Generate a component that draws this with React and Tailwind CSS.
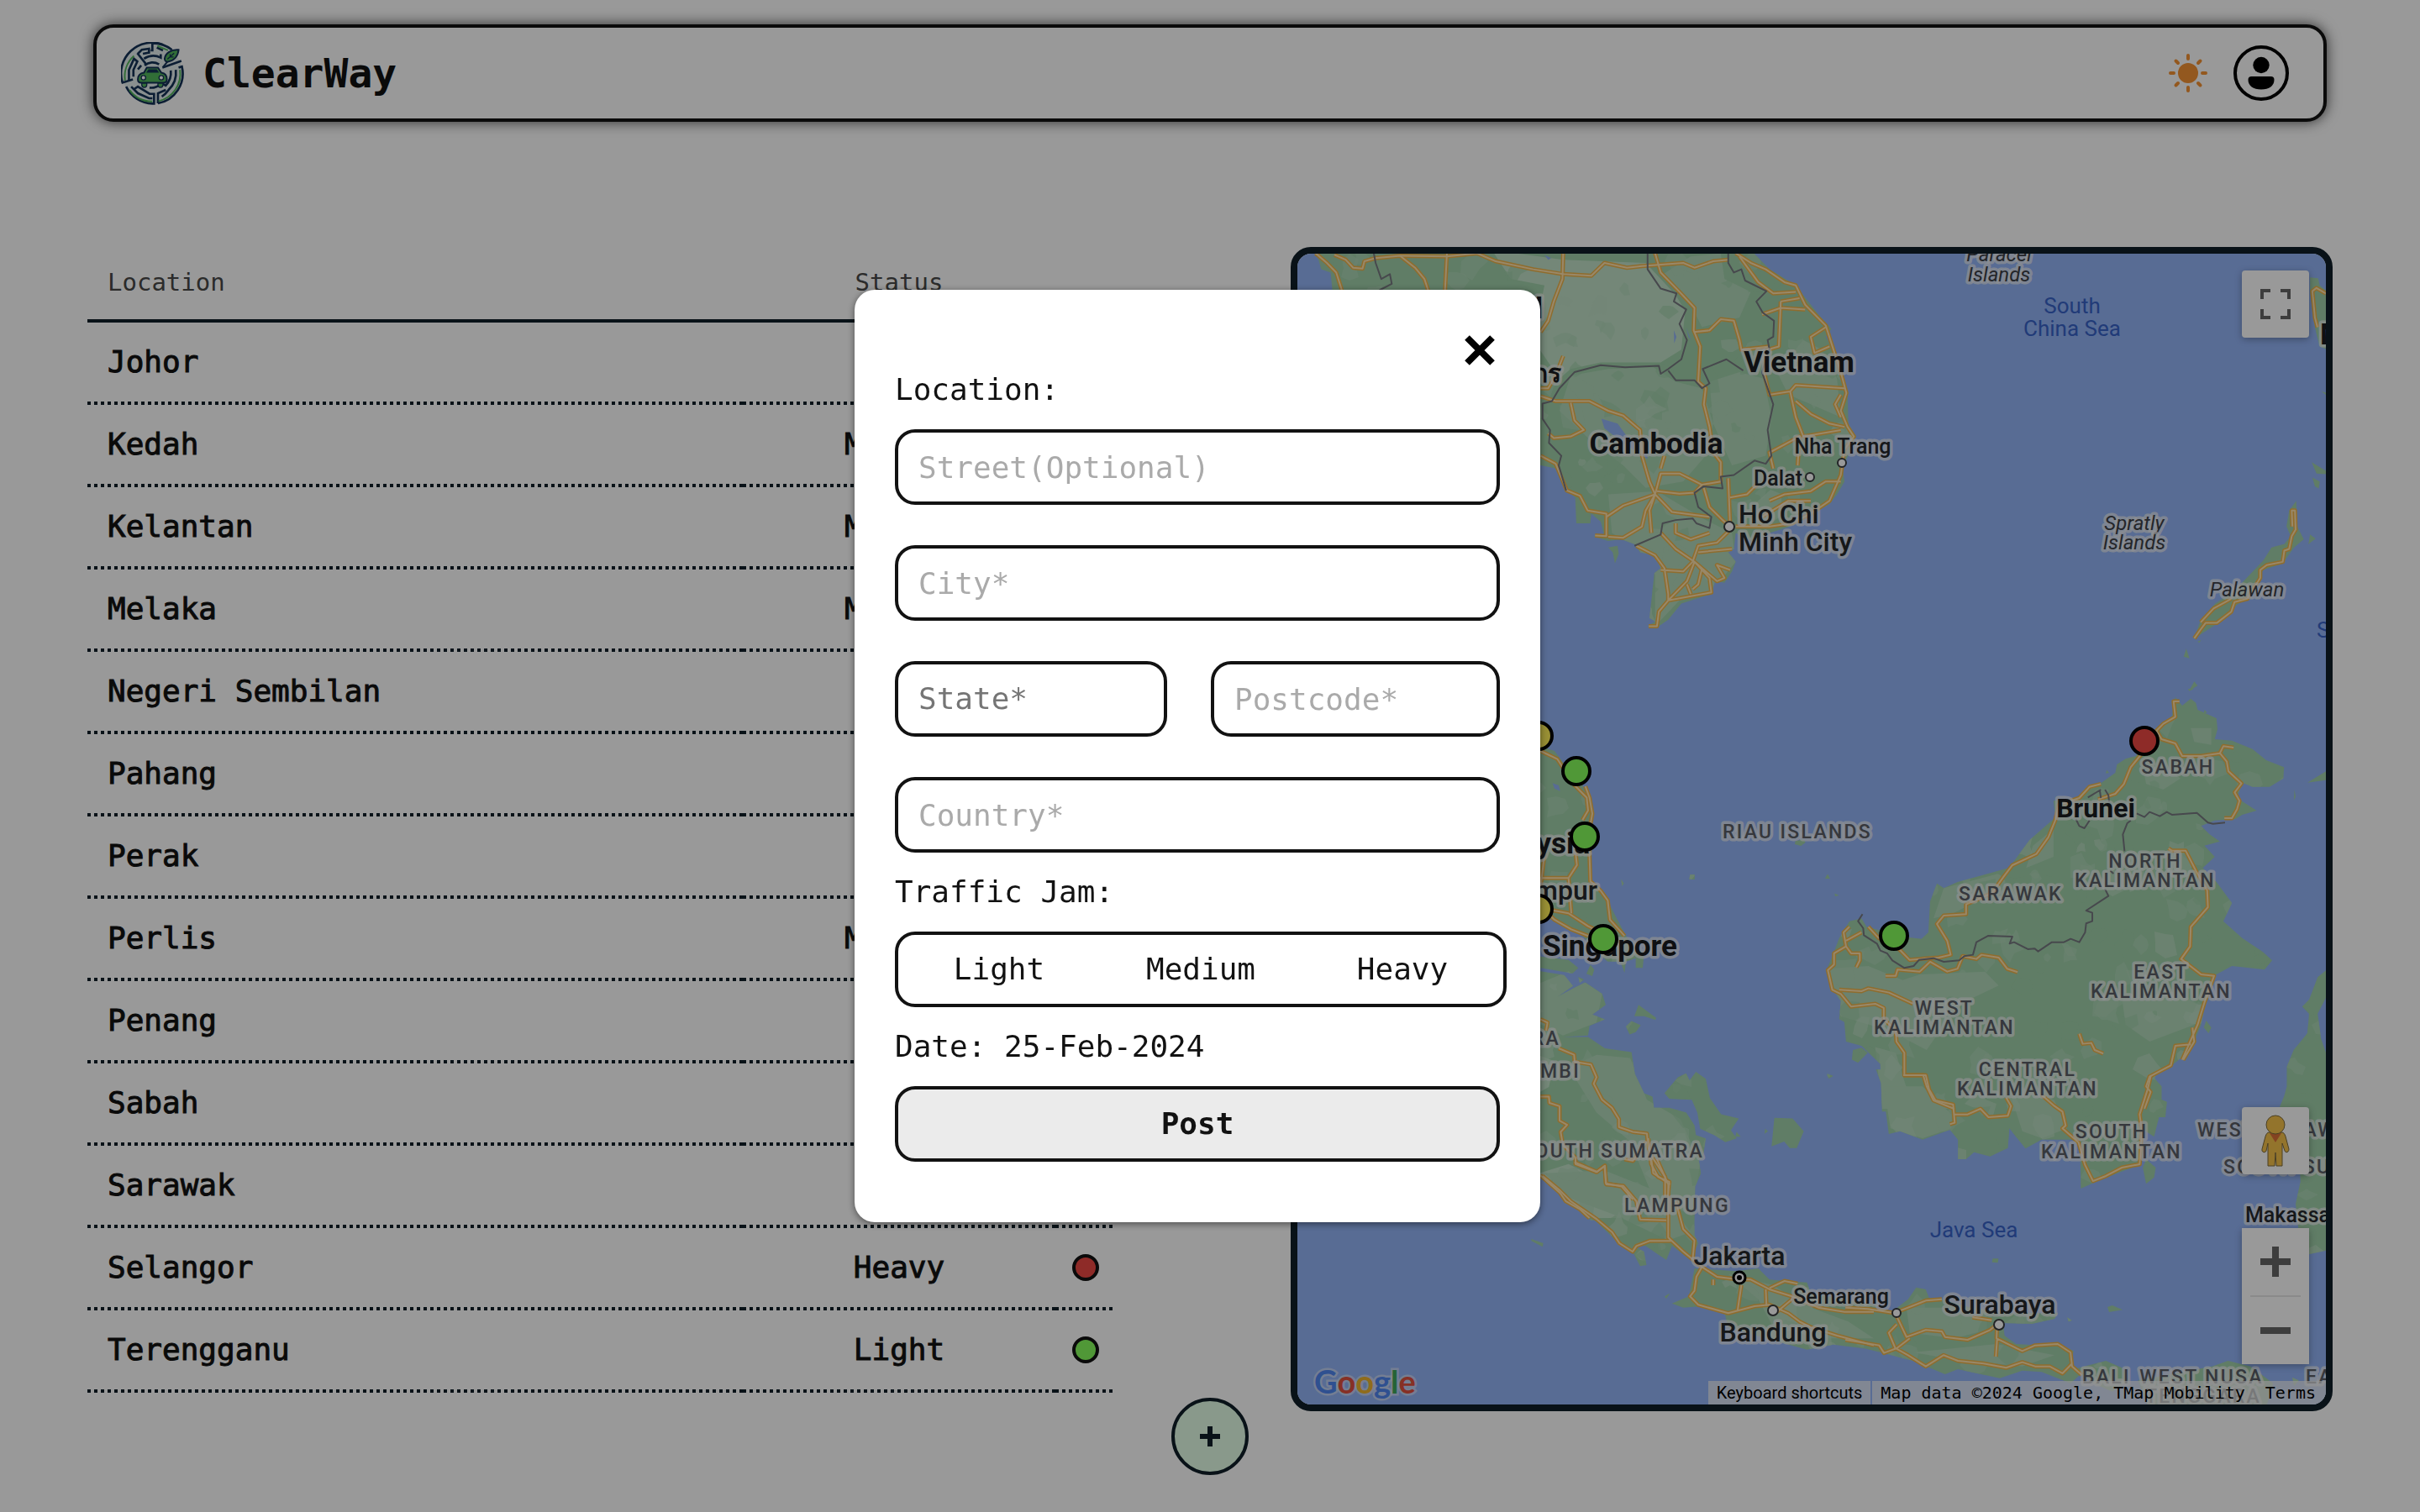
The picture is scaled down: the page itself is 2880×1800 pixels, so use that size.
import React from "react";

/* ---------- data ---------- */

const ROWS = [
  ["Johor", "Light"],
  ["Kedah", "Medium"],
  ["Kelantan", "Medium"],
  ["Melaka", "Medium"],
  ["Negeri Sembilan", "Light"],
  ["Pahang", "Light"],
  ["Perak", "Light"],
  ["Perlis", "Medium"],
  ["Penang", "Light"],
  ["Sabah", "Heavy"],
  ["Sarawak", "Light"],
  ["Selangor", "Heavy"],
  ["Terengganu", "Light"],
];

const DOT = {
  Light: "bg-[#85fd5d]",
  Medium: "bg-[#fdee58]",
  Heavy: "bg-[#ed4943]",
};

/* ---------- header ---------- */

function Logo() {
  return (
    <svg viewBox="0 0 225 226" className="size-[75px]" aria-hidden="true">
      <circle cx="112" cy="113" r="108" fill="#e4eeee" />
      <g fill="none" stroke="#143257" strokeWidth="8">
        <path d="M150 10 A110 110 0 0 0 5 146 L42 134" />
        <path d="M182 28 A109 109 0 0 0 112 4 L112 30 L106 30" />
        <path d="M18 160 A109 109 0 0 0 112 221 L118 221 L118 186 L102 186 L60 160 L48 168" />
        <path d="M132 220 A109 109 0 0 0 218 88 L206 92" />
        <path d="M132 220 L132 184 L160 172" />
        <path d="M28 136 L28 100 L46 60 L58 70 L44 100 L44 124" />
        <path d="M58 40 L90 80" />
        <path d="M60 42 L74 28 L100 24 L100 38 L78 42" />
        <path d="M82 60 A62 62 0 0 1 142 56 L142 44" />
        <path d="M84 84 A44 44 0 0 1 136 80" />
        <path d="M60 98 L72 84" />
        <path d="M178 102 A68 68 0 0 1 160 156 L148 150" />
        <path d="M196 100 A86 86 0 0 1 170 172 L158 186 L146 196" />
        <path d="M36 160 L60 184 L100 202 L112 202" />
        <path d="M102 164 A50 50 0 0 0 140 152" />
        <path d="M128 20 L150 30" />
        <path d="M148 92 L216 68" />
      </g>
      <g fill="none" stroke="#53b75c" strokeWidth="6">
        <path d="M14 138 A100 100 0 0 1 46 50" />
        <path d="M30 172 A100 100 0 0 0 112 213" />
        <path d="M134 212 A100 100 0 0 0 211 100" />
        <path d="M130 14 L168 30" />
      </g>
      <path d="M150 90 L170 66" stroke="#143257" strokeWidth="6" />
      <path d="M206 28 C180 26 158 40 156 60 C156 68 162 72 170 70 C190 66 204 50 206 28Z" fill="#53b75c" stroke="#143257" strokeWidth="6" />
      <path d="M166 62 L190 40 M176 54 L176 44 M176 54 L188 54" stroke="#143257" strokeWidth="4" />
      <path d="M60 134 C60 118 70 112 82 110 L92 92 L132 92 L144 110 C156 112 164 118 164 134 C164 142 158 146 152 146 L72 146 C64 146 60 142 60 134Z" fill="#53b75c" stroke="#143257" strokeWidth="6" />
      <path d="M90 110 L98 98 L128 98 L136 110Z" fill="#143257" />
      <path d="M74 148h18v6a9 9 0 0 1-18 0zM132 148h18v6a9 9 0 0 1-18 0z" fill="#53b75c" stroke="#143257" strokeWidth="4" />
      <circle cx="80" cy="128" r="8" fill="#fff" stroke="#143257" strokeWidth="4" />
      <circle cx="144" cy="128" r="8" fill="#fff" stroke="#143257" strokeWidth="4" />
    </svg>
  );
}

function SunIcon() {
  return (
    <svg viewBox="0 0 48 48" className="size-12" aria-hidden="true">
      <circle cx="24" cy="24" r="12" fill="#f59334" />
      <g stroke="#f59334" strokeWidth="4" strokeLinecap="round">
        <path d="M24 3v4M24 41v4M3 24h4M41 24h4M9.500 9.500l2.500 2.500M36 36l2.500 2.500M9.500 38.500l2.500-2.500M36 12l2.500-2.500" />
      </g>
    </svg>
  );
}

function ProfileIcon() {
  return (
    <svg viewBox="0 0 66 66" className="size-[66px]" aria-hidden="true">
      <circle cx="33" cy="33" r="31" fill="none" stroke="#000" strokeWidth="4" />
      <circle cx="33" cy="23.500" r="9.700" />
      <path d="M21.500 37h23a4 4 0 0 1 4 4c0 7-6 11.500-15.500 11.500S17.500 48 17.500 41a4 4 0 0 1 4-4z" />
    </svg>
  );
}

function Header() {
  return (
    <header className="mx-[111px] flex h-[116px] items-center justify-between rounded-[24px] border-4 border-[#121212] bg-white pr-[41px] pl-[29px] shadow-[0_0_16px_rgba(0,0,0,0.7)]">
      <a href="#" className="flex items-center gap-[22px]">
        <Logo />
        <span className="text-[48px] leading-none font-bold text-[#121212]">ClearWay</span>
      </a>
      <div className="flex items-center gap-[30px]">
        <button type="button" aria-label="Toggle theme">
          <SunIcon />
        </button>
        <button type="button" aria-label="Account">
          <ProfileIcon />
        </button>
      </div>
    </header>
  );
}

/* ---------- table ---------- */

const DOTTED =
  "h-[98px] bg-[repeating-linear-gradient(90deg,#0f1f28_0px,#0f1f28_4px,transparent_4px,transparent_8px)] bg-[length:100%_4px] bg-bottom bg-no-repeat pb-1";
const HEAD = "h-[90px] border-b-4 border-[#0f1f28] font-normal";

function TrafficTable() {
  return (
    <table className="w-full table-fixed border-separate border-spacing-0 self-start text-[#121212]">
      <colgroup>
        <col />
        <col className="w-[372px]" />
        <col className="w-[72px]" />
      </colgroup>
      <thead>
        <tr className="text-[29px] text-[#484848]">
          <th className={`${HEAD} px-6 text-left`}>Location</th>
          <th className={`${HEAD} text-center`}>Status</th>
          <th className={HEAD} aria-label="Level" />
        </tr>
      </thead>
      <tbody>
        {ROWS.map(([name, status]) => (
          <tr key={name} className="text-[36px] [-webkit-text-stroke:1px_#121212]">
            <td className={`${DOTTED} px-6`}>{name}</td>
            <td className={`${DOTTED} text-center`}>{status}</td>
            <td className={DOTTED}>
              <span className={`mx-auto block size-8 rounded-full border-4 border-[#121212] ${DOT[status]}`} />
            </td>
          </tr>
        ))}
      </tbody>
    </table>
  );
}

/* ---------- map ---------- */

// Each region is drawn in its own grid and placed on the map by a transform.
const INDOCHINA = "translate(1530 290) scale(0.4464 0.3827)";
const PHILIPPINES = "translate(2200 290) scale(0.3827 0.3827)";
const SUMATRA = "translate(1800 850) scale(0.3333 0.3827)";
const BORNEO = "translate(2150 820) scale(0.4082 0.3333)";
const SUNDA = "translate(1530 1380) scale(0.4464 0.3333)";
const JAVA = "translate(2200 1280) scale(0.3827 0.3333)";

const LAND = [
  [INDOCHINA, "M80 20L95 80L120 90L125 150L400 500L680 690L725 700L750 768L772 790L775 870L812 870L815 840L840 865L850 910L820 910L860 925L895 920L930 935L945 960L985 970L1000 1010L983 1025L970 1165L985 1175L965 1190L985 1198L1020 1170L1055 1120L1135 1090L1145 1050L1170 1055L1190 1020L1200 990L1180 960L1195 950L1200 900L1250 930L1290 900L1345 880L1350 850L1420 830L1450 810L1470 780L1490 740L1485 700L1520 600L1500 560L1498 460L1480 400L1455 320L1440 290L1455 265L1420 220L1360 130L1290 80L1240 20Z"],
  [INDOCHINA, "M860 945L885 940L888 965L878 995L872 960Z"],
  [PHILIPPINES, "M1075 1228L1095 1170L1140 1120L1200 1080L1290 985L1315 945L1355 935L1375 910L1362 880L1370 830L1392 800L1395 880L1415 920L1385 945L1350 995L1290 1015L1240 1100L1200 1130L1150 1180Z"],
  [PHILIPPINES, "M1440 680L1490 710L1490 718L1455 715ZM1442 728L1465 740L1462 762L1450 755ZM1435 905L1452 918L1430 935ZM1050 1260L1060 1290L1042 1285ZM1075 1362L1085 1375L1058 1392ZM1470 460L1490 465L1490 475ZM1085 1238L1096 1234L1090 1242Z"],
  [PHILIPPINES, "M1435 105L1460 108L1465 130L1490 150L1490 330L1465 320L1450 260L1435 150Z"],
  [SUMATRA, "M60 90L150 115L180 150L250 220L285 300L275 440L282 520L310 545L345 590L375 640L405 690L430 720L470 745L465 790L440 790L440 760L405 770L400 805L385 770L340 770L300 740L250 690L200 660L150 640L60 610Z"],
  [SUMATRA, "M60 750L200 765L235 790L215 807L120 800L180 808L222 842L160 880L225 850L260 835L320 870L333 905L285 935L330 950L275 970L270 1000L180 1005L270 1005L330 1040L425 1052L437 1120L470 1180L500 1190L505 1225L560 1225L620 1240L650 1280L655 1310L690 1320L680 1380L655 1395L672 1430L652 1470L650 1575L280 1575L200 1520L60 1400Z"],
  [SUMATRA, "M543 1180L590 1130L620 1118L632 1140L655 1113L690 1135L705 1195L745 1245L808 1258L780 1295L800 1320L760 1332L720 1310L670 1290L660 1240L640 1200L560 1197ZM935 1256L1000 1258L1040 1298L1015 1350L990 1350L970 1330L925 1345Z"],
  [SUMATRA, "M450 905L513 945L510 952L470 940L435 940ZM425 955L458 968L440 990L418 997L405 972ZM278 780L292 795L285 815L264 808ZM235 818L255 826L240 836ZM634 500L650 500L650 515L631 515ZM1123 500L1132 512L1116 512ZM1150 558L1165 564L1152 567ZM388 515L398 527L391 535ZM902 1290L912 1298L900 1306ZM1122 1122L1145 1126L1130 1134ZM1010 395L1040 390L1046 400L1030 410L1008 405ZM800 1300L815 1315L795 1315Z"],
  [BORNEO, "M1075 30L1095 60L1120 35L1135 50L1140 75L1195 105L1198 145L1190 180L1240 185L1300 215L1340 255L1392 280L1390 320L1350 350L1300 350L1270 335L1255 390L1312 435L1270 450L1250 465L1190 470L1150 490L1175 520L1205 545L1160 560L1190 600L1155 640L1195 690L1240 765L1215 830L1270 890L1330 940L1357 970L1335 1003L1240 990L1195 1020L1165 1110L1150 1200L1120 1290L1060 1350L1010 1385L1035 1420L1035 1510L220 1510L215 1340L160 1275L115 1260L110 1190L95 1180L100 1115L70 1060L60 1000L80 940L95 890L125 830L160 820L175 850L280 885L335 893L355 870L360 760L380 695L400 712L440 690L590 640L650 540L725 460L720 400L790 390L830 345L860 335L900 300L905 270L930 250L960 240L990 180L1020 140L1065 100Z"],
  [BORNEO, "M1460 335L1520 290L1520 325ZM875 290L882 300L872 302ZM1160 75L1168 85L1158 88ZM1112 0L1130 0L1115 8ZM1422 360L1426 385L1421 398ZM1165 1185L1180 1210L1172 1230L1158 1210ZM135 1290L160 1282L178 1300L150 1335L132 1325ZM62 662L68 678L54 678ZM82 733L94 738L84 741ZM60 1375L76 1382L66 1392Z"],
  [BORNEO, "M1520 1000L1490 1030L1465 1110L1445 1135L1465 1160L1460 1230L1420 1290L1400 1350L1400 1420L1380 1510L1520 1510L1520 1320L1500 1250L1490 1160L1520 1090Z"],
  [JAVA, "M85 -20L105 40L125 210L160 200L230 230L315 195L340 230L340 300L365 300L390 275L440 290L495 260L500 190L550 262L600 230L720 230L722 405L780 375L905 320L910 190L950 220L965 150L985 150L990 95L960 80L950 20L960 -20ZM925 300L955 330L950 365L925 388L915 330Z"],
  [JAVA, "M1365 -40L1370 30L1340 115L1400 130L1405 380L1390 460L1400 560L1430 640L1490 625L1490 -40Z"],
  [JAVA, "M-10 840L140 840L185 800L210 758L240 765L250 795L290 800L380 830L500 850L650 850L640 870L570 888L480 885L485 930L520 960L600 965L640 955L700 985L690 1030L730 1060L690 1100L600 1060L540 1055L470 1082L340 1050L300 1068L200 1020L100 990L-10 960Z"],
  [JAVA, "M700 1050L800 1020L850 1045L870 1090L820 1130L760 1100ZM1130 1040L1180 1020L1250 1040L1320 1100L1300 1180L930 1180L900 1090ZM1380 1080L1400 1090L1385 1110ZM448 655L466 655L464 670L446 668ZM805 828L820 822L852 838L810 846ZM680 865L694 876L684 880Z"],
  [SUNDA, "M620 -10L680 60L740 130L830 225L880 290L925 330L945 382L962 378L955 330L930 310L960 310L1015 360L1030 310L1080 360L1100 300L1090 270L1090 100L1107 50L1100 -10ZM655 285L687 300L685 313L655 292ZM1010 490L1024 480L1015 498Z"],
  [SUNDA, "M1090 390L1200 400L1260 390L1290 430L1330 435L1390 440L1400 480L1575 520L1575 682L1460 662L1390 680L1280 640L1180 600L1170 550L1110 525L1060 530L1030 515L1075 490Z"],
];

const PATCHES = [
  [INDOCHINA, "M550 20L740 50L960 60L1000 110L1040 160L1065 210L1055 330L1000 370L840 370L760 390L730 420L660 300L690 130L600 110Z", "#c1e1c8"],
  [INDOCHINA, "M760 410L860 390L980 385L1040 430L1110 450L1140 560L1120 660L1060 740L960 760L900 690L820 620L730 520Z", "#b2d9bb"],
  [INDOCHINA, "M1130 430L1210 400L1275 420L1295 540L1280 660L1190 690L1140 560Z", "#b2d9bb"],
  [INDOCHINA, "M860 780L990 770L1120 860L1190 900L1200 990L1130 1090L1050 1110L985 1190L985 1030L940 950L870 900Z", "#b2d9bb"],
  [INDOCHINA, "M1000 100L1080 40L1160 30L1170 110L1240 150L1210 230L1110 260L1080 190Z", "#b2d9bb"],
  [INDOCHINA, "M1310 400L1380 300L1430 330L1470 420L1480 540L1400 500L1340 470Z", "#b2d9bb"],
  [SUMATRA, "M90 840L200 800L320 870L300 960L180 1000L90 960ZM300 1060L420 1070L480 1200L600 1260L670 1400L640 1560L500 1500L420 1330L300 1240L200 1100Z", "#b2d9bb"],
  [SUMATRA, "M90 1430L200 1400L340 1460L430 1568L280 1568ZM90 1060L150 1080L130 1160L90 1180Z", "#c1e1c8"],
  [BORNEO, "M60 1000L180 990L280 1040L330 1020L520 1010L560 1060L440 1130L350 1290L240 1220L100 1170L70 1060Z", "#b2d9bb"],
  [BORNEO, "M200 1280L260 1300L290 1420L420 1500L220 1500Z", "#b2d9bb"],
  [BORNEO, "M920 1110L1080 1080L1150 1130L1130 1200L1000 1260L930 1200ZM985 310L1060 290L1090 320L1040 360L990 340Z", "#b2d9bb"],
  [BORNEO, "M400 712L560 660L590 700L430 800L370 820ZM660 560L720 500L720 600L640 640ZM1120 140L1180 140L1180 200L1130 190Z", "#b2d9bb"],
  [JAVA, "M110 40L230 40L320 140L320 190L230 225L130 190ZM490 20L640 90L680 190L600 225L540 200Z", "#b2d9bb"],
  [JAVA, "M180 830L430 830L430 910L330 940L190 920ZM200 990L460 960L640 1000L540 1040L300 1010Z", "#b2d9bb"],
  [SUNDA, "M690 50L850 40L1000 120L1080 260L1020 290L880 200L760 140ZM1180 410L1300 450L1380 520L1500 580L1568 640L1430 640L1300 600L1260 500Z", "#b2d9bb"],
];

const LAKES = [
  [INDOCHINA, "M842 545L885 560L910 600L960 630L965 670L900 620L850 575ZM1068 260L1080 300L1074 290ZM690 35L708 45L700 50ZM1035 270L1042 290L1036 310Z"],
  [SUMATRA, "M143 215L165 222L170 240L150 232ZM100 790L200 805L222 840L218 848L185 812L100 800Z"],
];

const ROADS = [
  [INDOCHINA, "M80 30L110 60L135 90L150 145"],
  [INDOCHINA, "M130 35L160 50L180 75L205 78L210 55L240 45L305 38L345 75L370 110L380 145"],
  [INDOCHINA, "M305 38L430 40L510 30L560 55L660 80L740 95L815 100L850 60L910 75L950 70L1060 60L1090 75L1140 55L1180 50"],
  [INDOCHINA, "M430 30L425 145M740 30L738 110L715 180L700 240L680 275M740 350L720 410L700 450L680 450"],
  [INDOCHINA, "M985 30L1000 90L1050 150L1090 200L1088 270L1105 320L1100 430L1120 450L1115 500L1130 570L1140 650L1160 680L1160 740L1110 750"],
  [INDOCHINA, "M1088 275L1130 270L1160 235L1195 240L1210 300L1215 330L1290 320"],
  [INDOCHINA, "M1200 30L1240 60L1280 80L1330 120L1360 130L1385 190L1440 255L1455 310L1480 400L1495 465L1480 520L1498 570L1515 600L1490 640L1480 720L1450 800L1400 840L1350 870L1290 880L1200 880"],
  [INDOCHINA, "M1210 40L1260 120L1300 155L1360 150M1320 180L1370 170M1270 220L1320 200L1385 205M1320 180L1315 320L1285 330L1275 400L1290 470L1345 460L1360 440L1490 450"],
  [INDOCHINA, "M1440 260L1400 290L1410 340L1450 320M1345 460L1360 540L1380 600L1480 580M1360 490L1400 530L1450 560L1490 570M1480 470L1465 500L1480 540"],
  [INDOCHINA, "M680 475L720 490L810 490L860 520L900 535L945 580L950 660L970 740L985 780L1000 715L1050 715L1110 750L1090 775L1050 778L990 770"],
  [INDOCHINA, "M760 495L770 550L795 580L760 600L715 605L700 590M680 660L720 685L750 768L785 785L805 830L855 840L855 910L825 908"],
  [INDOCHINA, "M855 850L900 815L985 780L960 830L950 880L900 915L860 912M985 780L970 830L975 900M985 780L1030 835L1130 850M1000 700L1010 660"],
  [INDOCHINA, "M1115 760L1130 820L1165 860L1185 880L1180 730M1185 790L1230 780L1260 745M1300 700L1290 650L1370 600L1365 690M1290 800L1330 780L1400 770L1440 740L1480 740M1270 850L1340 800L1400 800"],
  [INDOCHINA, "M1000 900L1040 950L1090 990L1150 1050L1170 1040L1150 1000L1185 1015M1040 870L1040 900L1080 920L1130 900M1185 890L1150 930L1100 940L1085 990L1060 1020L1000 1015M935 940L985 970L1010 1010L1020 1090L1020 1110L995 1145L990 1190L968 1190M1020 1110L1070 1050L1090 990L1130 1040L1135 1085L1020 1110M1100 960L1190 950M1070 1060L1080 1090M1110 1010L1100 1060L1085 1075"],
  [PHILIPPINES, "M1075 1228L1095 1200L1110 1180L1145 1180L1190 1145L1200 1115L1240 1105L1280 1040L1280 1015L1300 1000L1350 990L1355 955L1370 950L1378 910L1390 890L1388 830L1378 830L1380 880"],
  [PHILIPPINES, "M1095 1178L1135 1135L1190 1105M1484 155L1455 138L1442 148L1450 230L1458 260"],
  [SUMATRA, "M100 115L160 140L220 220L265 260L270 300L250 330M260 225L275 260L285 310L275 360L275 440L278 520L315 550L340 580L348 640L400 690M100 510L200 510L230 470L225 430M100 540L115 430M210 620L200 510M140 610L200 620L270 660L340 690M100 600L150 640L210 670L270 690"],
  [SUMATRA, "M100 950L125 960L120 985M165 1040L220 1060L222 1082L280 1090L300 1130L290 1150L320 1200L355 1225L380 1260L380 1285L430 1300L480 1305L485 1350L500 1380L545 1440L545 1500M100 1190L130 1190L132 1210L168 1220L168 1265L195 1278L172 1300L180 1340L225 1380L225 1400L300 1425L330 1405L333 1460L390 1470L430 1510M485 1320L495 1400L520 1440L560 1455L555 1500M400 1385L430 1390L480 1330"],
  [SUMATRA, "M100 1435L170 1490L190 1515L240 1540L275 1568"],
  [BORNEO, "M1087 45L1070 45L1075 100L1040 125L1020 150L1035 180L1075 195L1095 240L1150 240L1205 230L1215 205L1245 210M1205 230L1225 260L1230 295L1268 338L1248 370L1262 400L1255 430L1240 462L1218 462"],
  [BORNEO, "M975 235L945 280L925 340L900 375L850 395M858 340L825 350L795 390L735 415L725 470L705 530L670 590L600 630L575 670L540 730L465 770L465 805L400 810L380 840L410 900L420 950L385 960L300 968L270 930L210 890L180 850"],
  [BORNEO, "M125 850L108 870L115 920L80 945L80 985L62 1005L75 1075L100 1090L130 1135L200 1125L225 1140L225 1180L260 1220L262 1260L285 1300L285 1380L340 1380L350 1420L370 1470L430 1500M95 1075L160 1080L180 1070L240 1085L310 1125M115 900L160 870M115 920L130 945L155 945L155 970L145 995M230 1025L260 1025L265 1003L330 1010L360 975L410 1010L440 1000L455 955L495 965L510 950L560 960L585 1000L615 1012"],
  [BORNEO, "M1055 570L1065 578L1105 578L1135 650L1168 720L1170 780L1120 850L1118 920L1092 965L1150 1020L1188 1025L1160 1120L1140 1200L1095 1325M1125 1210L1130 1260L1098 1325M1120 1270L1075 1275L1062 1345L1000 1385L990 1420L1003 1440L985 1500M795 1232L805 1268L830 1265L840 1290L865 1303"],
  [JAVA, "M170 0L240 0L250 50L270 90L325 105L330 170L315 175M330 140L370 140L410 120L435 150L495 145L505 110L490 80M600 70L640 110L665 130L675 180L665 190L715 240L735 320L760 378L800 360L850 330L905 318L912 200L905 140L930 50L940 0"],
  [JAVA, "M-10 830L60 835L145 850L180 935L240 910L290 915L300 935L370 945L440 910L462 890L460 940L540 985L580 965L650 960L690 990L695 1040L725 1070M145 848L240 805L290 800M150 890L125 920L145 975L185 1000L240 1040L295 1000L340 1020L420 1030L490 1045L540 1025L580 1040L625 1040L665 1065L695 1030M190 940L150 975L110 992L95 965L-10 945M462 940L458 1005M385 865L445 875"],
  [SUNDA, "M685 60L730 110L760 150L830 215L870 260L890 300L925 330L935 310L970 292L1030 292M990 0L1020 90L1020 280L1060 330L1110 385L1150 420L1200 428L1240 430L1290 465L1350 490L1420 530L1490 545L1568 545M770 10L830 45L850 25L855 90L900 95L935 150L945 215L1015 218M975 0L980 50L1025 90M1040 150L1060 250L1090 290L1085 360"],
  [SUNDA, "M1110 385L1095 420L1090 470L1078 490L1100 520L1180 550L1250 525L1290 520L1340 550L1370 580L1400 600L1470 630L1568 665M1140 430L1140 450M1215 450L1205 540M1280 465L1282 525M1290 460L1330 435L1365 445M1310 545L1350 500"],
];

const BORDERS = [
  [INDOCHINA, "M235 30L240 60L255 110L278 95L283 125L250 145M965 30L965 80L1000 140L1042 155L1035 180L1068 205L1050 250L1070 300L1055 360L1020 390L1000 405L995 380L905 385L840 378L770 400L730 450L710 490L685 498L685 545L705 580L702 620L735 660L728 690L748 768M1020 395L1040 425L1090 425L1110 450L1130 435L1112 390L1175 360L1220 395M1180 30L1180 60L1195 90L1215 80L1225 115L1282 148L1255 180L1272 215L1302 240L1300 290L1285 300L1290 330L1270 400L1300 500L1285 580L1295 660L1280 685L1250 675L1195 720L1160 725L1165 762L1115 755L1090 775L1100 820L1135 850L1130 885L1095 870L1085 855L1040 860L1005 870L1000 905L930 940"],
  [BORNEO, "M163 805L150 830L165 855L167 880L205 910L215 935L235 945L250 970L285 997L312 990L328 968L370 962L400 975L445 970L460 955L485 950L495 905L530 882L600 885L592 910L605 905L645 930L665 928L675 938L715 905L750 905L770 893L795 905L812 870L815 838L833 830L833 800L815 792L880 740L870 715M895 660L885 650M927 580L922 520L935 480L945 470M962 445L985 458L1000 440L1030 455L1050 440L1065 450L1138 443L1170 478L1185 482L1220 478M785 465L795 490L810 498L825 470M858 360L820 388M855 365L858 390M870 360L880 380L882 405"],
];

// Paler vegetation blotches, scattered the same way on every render.
const BLOTCHES = (() => {
  let seed = 41;
  const rnd = () => {
    seed = (seed * 16807) % 2147483647;
    return seed / 2147483647;
  };
  return Array.from({ length: 1100 }, () => {
    const cx = 1544 + rnd() * 1224;
    const cy = 302 + rnd() * 1370;
    const r = 5 + rnd() * 15;
    const pts = Array.from({ length: 8 }, (_, k) => {
      const a = (k / 8) * Math.PI * 2;
      const q = r * (0.4 + rnd() * 0.8);
      return `${Math.round(cx + Math.cos(a) * q)},${Math.round(cy + Math.sin(a) * q)}`;
    });
    const tone = rnd();
    return [pts.join(" "), tone < 0.4 ? "#a0d0aa" : tone < 0.8 ? "#b2d9bb" : "#bfe0c6"];
  });
})();

const HALO = "[paint-order:stroke] stroke-[#f0f2f4]/70 stroke-[7px] [stroke-linejoin:round]";
const LABEL = {
  country: `text-[35px] font-bold fill-[#1a1c20] ${HALO}`,
  state: `text-[32px] font-bold fill-[#1a1c20] ${HALO}`,
  city: `text-[32px] font-medium fill-[#26282c] ${HALO}`,
  town: `text-[25px] font-medium fill-[#26282c] ${HALO}`,
  region: `text-[23px] font-medium tracking-widest fill-[#5a5e66] ${HALO}`,
  isle: `text-[24px] italic fill-[#3c4046] ${HALO}`,
  sea: "text-[26px] fill-[#3763c8]",
};

const LABELS = [
  ["country", 1836, 379, "end", "Thailand"],
  ["country", 2141, 443, "middle", "Vietnam"],
  ["country", 1971, 540, "middle", "Cambodia"],
  ["town", 2193, 540, "middle", "Nha Trang"],
  ["town", 2087, 578, "start", "Dalat"],
  ["city", 2069, 623, "start", "Ho Chi"],
  ["city", 2069, 656, "start", "Minh City"],
  ["country", 1892, 1016, "end", "Malaysia"],
  ["city", 1901, 1071, "end", "Kuala Lumpur"],
  ["country", 1996, 1138, "end", "Singapore"],
  ["region", 2139, 998, "middle", "RIAU ISLANDS"],
  ["region", 1857, 1244, "end", "WEST SUMATRA"],
  ["region", 1881, 1283, "end", "JAMBI"],
  ["region", 2028, 1378, "end", "SOUTH SUMATRA"],
  ["region", 1996, 1443, "middle", "LAMPUNG"],
  ["region", 2592, 921, "middle", "SABAH"],
  ["state", 2494, 973, "middle", "Brunei"],
  ["region", 2393, 1072, "middle", "SARAWAK"],
  ["region", 2553, 1033, "middle", "NORTH"],
  ["region", 2553, 1056, "middle", "KALIMANTAN"],
  ["region", 2572, 1165, "middle", "EAST"],
  ["region", 2572, 1188, "middle", "KALIMANTAN"],
  ["region", 2314, 1208, "middle", "WEST"],
  ["region", 2314, 1231, "middle", "KALIMANTAN"],
  ["region", 2413, 1281, "middle", "CENTRAL"],
  ["region", 2413, 1304, "middle", "KALIMANTAN"],
  ["region", 2513, 1355, "middle", "SOUTH"],
  ["region", 2513, 1379, "middle", "KALIMANTAN"],
  ["region", 2615, 1353, "start", "WEST SULAWESI"],
  ["region", 2646, 1397, "start", "SOUTH SULAWESI"],
  ["town", 2672, 1455, "start", "Makassar"],
  ["city", 2070, 1506, "middle", "Jakarta"],
  ["town", 2191, 1552, "middle", "Semarang"],
  ["city", 2110, 1597, "middle", "Bandung"],
  ["city", 2380, 1564, "middle", "Surabaya"],
  ["sea", 2349, 1473, "middle", "Java Sea"],
  ["sea", 2466, 373, "middle", "South"],
  ["sea", 2466, 400, "middle", "China Sea"],
  ["sea", 2757, 759, "start", "Sulu Sea"],
  ["isle", 2379, 311, "middle", "Paracel"],
  ["isle", 2379, 335, "middle", "Islands"],
  ["isle", 2540, 631, "middle", "Spratly"],
  ["isle", 2540, 654, "middle", "Islands"],
  ["isle", 2674, 710, "middle", "Palawan"],
  ["region", 2478, 1647, "start", "BALI"],
  ["region", 2620, 1647, "middle", "WEST NUSA"],
  ["region", 2622, 1670, "middle", "TENGGARA"],
  ["region", 2744, 1647, "start", "EAST NUSA"],
  ["country", 2761, 410, "start", "Manila"],
];

const TOWNS = [
  [2192, 551, 5],
  [2154, 568, 5],
  [2058, 627, 6],
  [2110, 1560, 6],
  [2257, 1563, 5],
  [2379, 1577, 6],
];

const MARKERS = [
  [1831, 876, "#fdee58"],
  [1831, 1082, "#fdee58"],
  [1876, 918, "#85fd5d"],
  [1886, 996, "#85fd5d"],
  [1908, 1118, "#85fd5d"],
  [2254, 1114, "#85fd5d"],
  [2552, 882, "#ed4943"],
];

function MapDrawing() {
  return (
    <svg
      viewBox="1544 302 1224 1370"
      preserveAspectRatio="xMidYMid slice"
      className="absolute inset-0 size-full bg-[#93b4f7] font-[Roboto,sans-serif]"
      role="img"
      aria-label="Traffic map"
    >
      <defs>
        <clipPath id="land">
          {LAND.map(([t, d], i) => (
            <path key={i} transform={t} d={d} />
          ))}
        </clipPath>
      </defs>
      <g clipPath="url(#land)">
        <rect x="1544" y="302" width="1224" height="1370" fill="#a0d0aa" />
        {PATCHES.map(([t, d, fill], i) => (
          <path key={i} transform={t} d={d} fill={fill} />
        ))}
        {BLOTCHES.map(([points, fill], i) => (
          <polygon key={i} points={points} fill={fill} opacity="0.6" />
        ))}
      </g>
      <g fill="#93b4f7">
        {LAKES.map(([t, d], i) => (
          <path key={i} transform={t} d={d} />
        ))}
      </g>
      <g fill="none" strokeLinejoin="round">
        <g stroke="#efb54c" strokeWidth="5">
          {ROADS.map(([t, d], i) => (
            <path key={i} transform={t} d={d} vectorEffect="non-scaling-stroke" />
          ))}
        </g>
        <g stroke="#ffe3ae" strokeWidth="2">
          {ROADS.map(([t, d], i) => (
            <path key={i} transform={t} d={d} vectorEffect="non-scaling-stroke" />
          ))}
        </g>
        <g stroke="#777980" strokeWidth="2">
          {BORDERS.map(([t, d], i) => (
            <path key={i} transform={t} d={d} vectorEffect="non-scaling-stroke" />
          ))}
        </g>
      </g>
      <text x="1858" y="455" textAnchor="end" className={`text-[30px] font-bold fill-[#1a1c20] ${HALO}`}>
        กร
      </text>
      {LABELS.map(([kind, x, y, anchor, text], i) => (
        <text key={i} x={x} y={y} textAnchor={anchor} className={LABEL[kind]}>
          {text}
        </text>
      ))}
      {TOWNS.map(([x, y, r]) => (
        <circle key={`${x}-${y}`} cx={x} cy={y} r={r} fill="#fff" stroke="#3a3c40" strokeWidth="2" />
      ))}
      <circle cx="2070" cy="1521" r="7" fill="#fff" stroke="#000" strokeWidth="3" />
      <circle cx="2070" cy="1521" r="3" />
      {MARKERS.map(([x, y, fill]) => (
        <circle key={`${x}-${y}`} cx={x} cy={y} r="16" fill={fill} stroke="#000" strokeWidth="4" />
      ))}
    </svg>
  );
}

const CONTROL = "grid place-items-center bg-white";

function MapPanel() {
  return (
    <section className="relative h-[1386px] overflow-hidden rounded-[24px] border-8 border-[#0f1f28]">
      <MapDrawing />

      <button
        type="button"
        aria-label="Toggle fullscreen view"
        className={`${CONTROL} absolute top-5 right-5 size-20 rounded-[4px] shadow-[0_2px_8px_rgba(0,0,0,0.3)]`}
      >
        <svg viewBox="0 0 36 36" className="size-9" fill="none" stroke="#666" strokeWidth="4">
          <path d="M2 12V2H12M24 2H34V12M34 24V34H24M12 34H2V24" />
        </svg>
      </button>

      <div className="absolute right-5 bottom-12 flex w-20 flex-col gap-16">
        <button
          type="button"
          aria-label="Street View"
          className={`${CONTROL} h-20 rounded-[4px] shadow-[0_2px_8px_rgba(0,0,0,0.3)]`}
        >
          <svg viewBox="0 0 36 64" className="h-16 w-9" strokeWidth="1">
            <path
              d="M11 22H25C28 22 29 24 30 27L34 42C34 46 30 47 29 44L26 35V62H19L18 46L17 62H9V35L7 44C6 47 1 46 2 42L6 27C7 24 8 22 11 22Z"
              fill="#f5c14a"
              stroke="#7c6a3c"
            />
            <path d="M11 23H25L18 34Z" fill="#dd7038" />
            <circle cx="18" cy="13" r="11" fill="#f5c14a" stroke="#7c6a3c" />
          </svg>
        </button>
        <div className="flex flex-col items-center rounded-[4px] bg-white shadow-[0_2px_8px_rgba(0,0,0,0.3)]">
          <button type="button" aria-label="Zoom in" className={`${CONTROL} size-20 bg-transparent`}>
            <svg viewBox="0 0 36 36" className="size-9" stroke="#666" strokeWidth="8">
              <path d="M18 0V36M0 18H36" />
            </svg>
          </button>
          <div className="h-[2px] w-[60px] bg-[#e6e6e6]" />
          <button type="button" aria-label="Zoom out" className={`${CONTROL} size-20 bg-transparent`}>
            <svg viewBox="0 0 36 36" className="size-9" stroke="#666" strokeWidth="8">
              <path d="M0 18H36" />
            </svg>
          </button>
        </div>
      </div>

      <a
        href="#"
        aria-label="Google"
        className="absolute bottom-0 left-5 font-[Lato,sans-serif] text-[38px] leading-[56px] font-bold [paint-order:stroke] [-webkit-text-stroke:5px_rgba(240,242,244,0.5)]"
      >
        <span className="text-[#4f86f0]">G</span>
        <span className="text-[#e0503f]">o</span>
        <span className="text-[#efb52f]">o</span>
        <span className="text-[#4f86f0]">g</span>
        <span className="text-[#3fa65a]">l</span>
        <span className="text-[#e0503f]">e</span>
      </a>

      <div className="absolute right-0 bottom-0 flex gap-[2px] text-[20px] leading-[28px] text-black">
        <button type="button" className="bg-[#f5f5f5]/70 px-[10px] font-[Roboto,sans-serif]">
          Keyboard shortcuts
        </button>
        <div className="flex gap-6 bg-[#f5f5f5]/70 pr-3 pl-[10px]">
          <span>Map data ©2024 Google, TMap Mobility</span>
          <a href="#">Terms</a>
        </div>
      </div>
    </section>
  );
}

/* ---------- dialog ---------- */

const FIELD =
  "h-[90px] w-full min-w-0 rounded-[24px] border-4 border-[#121212] bg-white px-6 text-[36px] text-[#121212] placeholder:text-[#aaaaaa]";

function PostDialog() {
  return (
    <div className="fixed inset-0 flex items-center justify-center bg-black/40">
      <form
        role="dialog"
        aria-label="Report traffic"
        className="mr-[30px] w-[816px] rounded-[24px] bg-white px-12 pt-12 pb-[72px] text-[36px] text-[#121212] shadow-[0_2px_8px_rgba(0,0,0,0.5)]"
      >
        <div className="flex h-[118px] justify-between">
          <p className="self-end leading-[94px]">Location:</p>
          <button type="button" aria-label="Close" className="size-12">
            <svg viewBox="0 0 48 48" className="size-12" stroke="#000" strokeWidth="8">
              <path d="M9 9L39 39M39 9L9 39" />
            </svg>
          </button>
        </div>
        <div className="flex flex-col gap-12">
          <input aria-label="Street" placeholder="Street(Optional)" className={FIELD} />
          <input aria-label="City" placeholder="City*" className={FIELD} />
          <div className="grid grid-cols-[324fr_344fr] gap-[52px]">
            <select aria-label="State" className={`${FIELD} appearance-none text-[#757575]`} defaultValue="">
              <option value="">State*</option>
            </select>
            <input aria-label="Postcode" placeholder="Postcode*" className={FIELD} />
          </div>
          <input aria-label="Country" placeholder="Country*" className={FIELD} />
        </div>
        <p className="leading-[94px]" id="jam">
          Traffic Jam:
        </p>
        <div
          role="radiogroup"
          aria-labelledby="jam"
          className="-mr-2 grid h-[90px] grid-cols-3 rounded-[24px] border-4 border-[#121212]"
        >
          {["Light", "Medium", "Heavy"].map((level) => (
            <label key={level} className="grid place-items-center rounded-[20px] has-checked:bg-[#ebebeb]">
              <input type="radio" name="jam" value={level} className="sr-only" />
              {level}
            </label>
          ))}
        </div>
        <p className="leading-[94px]">Date: 25-Feb-2024</p>
        <button
          type="submit"
          className="h-[90px] w-full rounded-[24px] border-4 border-[#121212] bg-[#ebebeb] font-bold"
        >
          Post
        </button>
      </form>
    </div>
  );
}

/* ---------- page ---------- */

export default function App() {
  return (
    <div className="min-h-screen bg-white pt-[29px] font-['DejaVu_Sans_Mono',monospace]">
      <Header />
      <main className="mt-[149px] grid grid-cols-[1224fr_1240fr] gap-52 px-[104px] pb-[120px]">
        <TrafficTable />
        <MapPanel />
      </main>
      <button
        type="button"
        aria-label="Add report"
        className="fixed bottom-11 left-1/2 grid size-[92px] -translate-x-1/2 place-items-center rounded-full border-4 border-[#0f1f28] bg-[#e4ffe8] text-[#0f1f28]"
      >
        <svg viewBox="0 0 24 24" className="size-6" stroke="currentColor" strokeWidth="6">
          <path d="M12 0V24M0 12H24" />
        </svg>
      </button>
      <PostDialog />
    </div>
  );
}
